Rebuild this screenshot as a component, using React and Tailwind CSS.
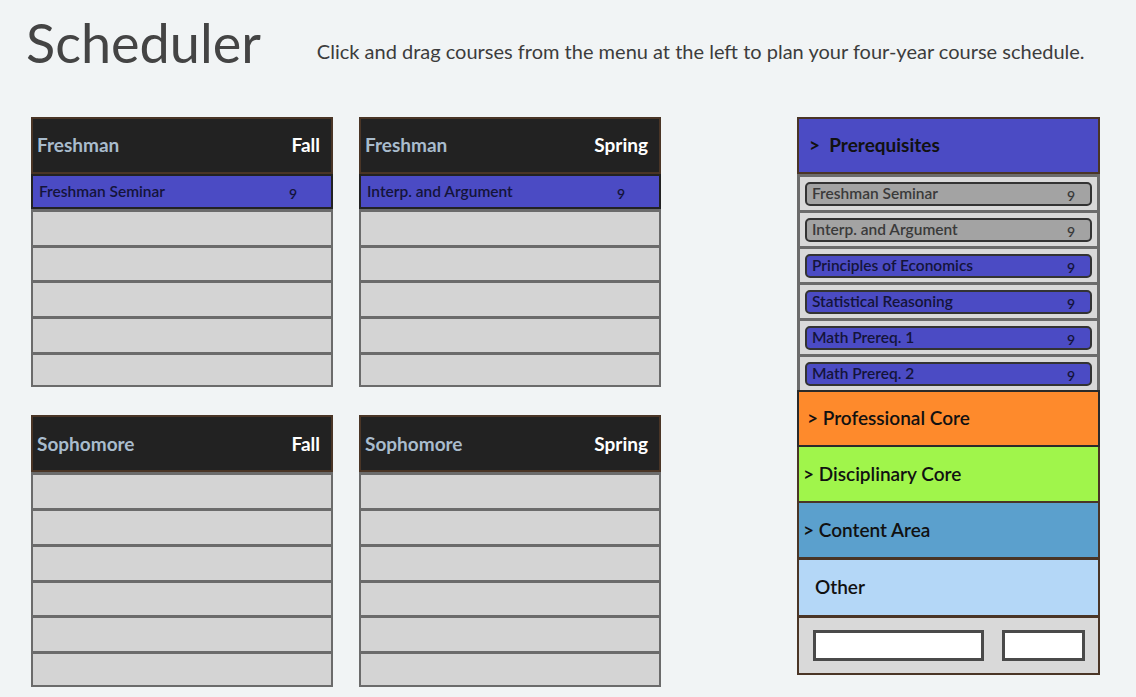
import React from 'react';

const font = { fontFamily: 'Lato, "Open Sans", sans-serif' };

function Semester({ year, term, course }) {
    const empty = course ? 5 : 6;
    return (
        <div className="w-[302px] flex flex-col">
            <div className="h-[57px] bg-[#222222] border-2 border-[#4a3526] flex items-center justify-between px-[4px] pr-[11px] text-[19px] font-bold">
                <span className="text-[#a9bccd]">{year}</span>
                <span className="text-white">{term}</span>
            </div>
            {course && (
                <div className="h-[35px] bg-[#4b4bc4] border-2 border-[#222222] flex items-center text-[15.5px] font-semibold text-[#14143a] pl-[6px]">
                    <span className="w-[250px]">{course}</span>
                    <span className="mt-1 text-[14px]">9</span>
                </div>
            )}
            {Array.from({ length: empty }).map((_, i) => (
                <div key={i} className={`h-[35.7px] bg-[#d4d4d4] border-x-2 border-t-[3px] border-[#6b6b6b] ${i === empty - 1 ? 'border-b-2' : ''}`} />
            ))}
        </div>
    );
}

function Prereq({ name, taken }) {
    return (
        <div className="h-[36px] bg-[#d9d9d9] border-x-[3px] border-t-[3px] border-[#6b6b6b] flex items-center px-[5px]">
            <div className={`w-full h-[24px] rounded-[5px] border-2 border-[#333333] flex items-center pl-[5px] text-[15.5px] font-semibold ${taken ? 'bg-[#a3a3a3] text-[#3a3a3a]' : 'bg-[#4b4bc4] text-[#14143a]'}`}>
                <span className="w-[255px]">{name}</span>
                <span className="mt-1 text-[14px]">9</span>
            </div>
        </div>
    );
}

export default function App() {
    const prereqs = [
        { name: 'Freshman Seminar', taken: true },
        { name: 'Interp. and Argument', taken: true },
        { name: 'Principles of Economics' },
        { name: 'Statistical Reasoning' },
        { name: 'Math Prereq. 1' },
        { name: 'Math Prereq. 2' },
    ];
    return (
        <div className="w-[1136px] h-[697px] bg-[#f1f4f5] overflow-hidden" style={font}>
            <div className="flex items-end pl-[26px] pt-[6px] h-[70px]">
                <h1 className="text-[54px] leading-none text-[#444444] font-normal">Scheduler</h1>
                <p className="ml-[56px] mb-[4px] text-[20px] text-[#3c3c3c]">Click and drag courses from the menu at the left to plan your four-year course schedule.</p>
            </div>

            <div className="flex mt-[47px]">
                <div className="ml-[31px] grid grid-cols-[302px_302px] gap-x-[26px] gap-y-[28px]">
                    <Semester year="Freshman" term="Fall" course="Freshman Seminar" />
                    <Semester year="Freshman" term="Spring" course="Interp. and Argument" />
                    <Semester year="Sophomore" term="Fall" />
                    <Semester year="Sophomore" term="Spring" />
                </div>

                <div className="ml-[136px] w-[303px] flex flex-col">
                    <div className="h-[57px] bg-[#4b4bc4] border-2 border-[#4a3526] flex items-center pl-[10px] text-[19px] font-bold text-[#111]">
                        &gt;&nbsp; Prerequisites
                    </div>
                    {prereqs.map((p) => (
                        <Prereq key={p.name} {...p} />
                    ))}
                    <div className="h-[57px] bg-[#fe8a2c] border-2 border-[#2a2a2a] flex items-center pl-[8px] text-[19px] font-semibold text-[#111]">&gt; Professional Core</div>
                    <div className="h-[56px] bg-[#a0f54b] border-x-2 border-b-2 border-[#4a3526] flex items-center pl-[4px] text-[19px] font-semibold text-[#111]">&gt; Disciplinary Core</div>
                    <div className="h-[57px] bg-[#5ba0cd] border-x-2 border-b-[3px] border-[#4a3526] flex items-center pl-[4px] text-[19px] font-semibold text-[#111]">&gt; Content Area</div>
                    <div className="h-[58px] bg-[#b4d7f7] border-x-2 border-b-[3px] border-[#4a3526] flex items-center pl-[16px] text-[19px] font-semibold text-[#111]">Other</div>
                    <div className="h-[57px] bg-[#d9d9d9] border-x-2 border-b-2 border-[#4a3526] flex items-center pl-[14px] gap-[18px]">
                        <input className="w-[171px] h-[31px] bg-white border-[3px] border-[#4a4a4a] outline-none" />
                        <input className="w-[83px] h-[31px] bg-white border-[3px] border-[#4a4a4a] outline-none" />
                    </div>
                </div>
            </div>
        </div>
    );
}
